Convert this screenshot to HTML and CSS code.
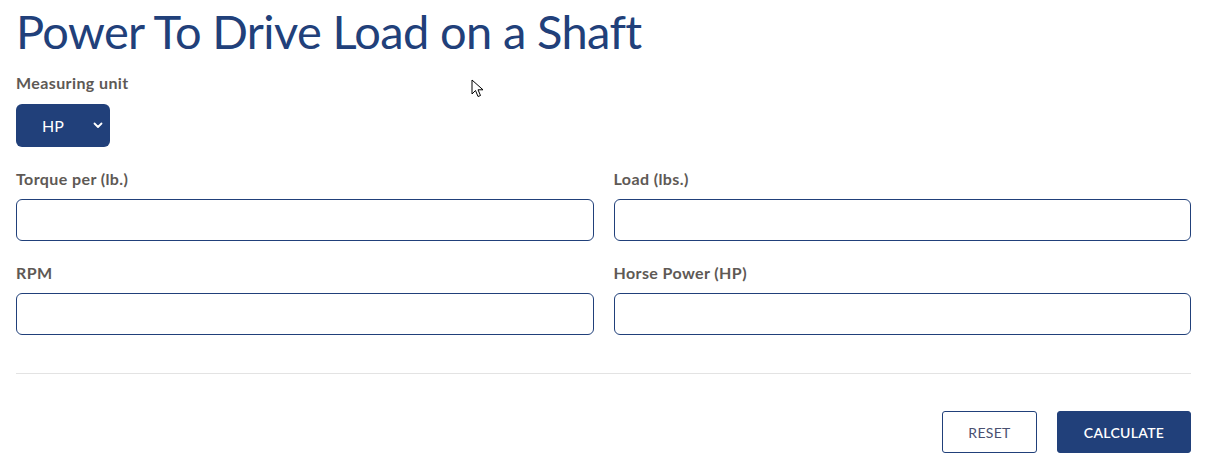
FILE: index.html
```html
<!DOCTYPE html>
<html lang="en">
<head>
    <meta charset="UTF-8">
    <meta name="viewport" content="width=device-width, initial-scale=1.0">
    <title>Power To Drive Load on a Shaft</title>
    <link rel="stylesheet" href="styles.css">
</head>
<body>
    <div class="calc-container">
        <h1 class="calc-title">Power To Drive Load on a Shaft</h1>

        <div class="form-group unit-group">
            <label for="unit">Measuring unit</label>
            <div class="select-wrap">
                <select id="unit" name="unit">
                    <option>HP</option>
                    <option>kW</option>
                </select>
                <svg class="select-arrow" width="10" height="7" viewBox="0 0 10 7">
                    <path d="M1.5 1.5 L5 5 L8.5 1.5" fill="none" stroke="#ffffff" stroke-width="1.8" stroke-linecap="round" stroke-linejoin="round"/>
                </svg>
            </div>
        </div>

        <div class="form-grid">
            <div class="form-group">
                <label for="torque">Torque per (lb.)</label>
                <input type="text" id="torque" name="torque">
            </div>
            <div class="form-group">
                <label for="load">Load (lbs.)</label>
                <input type="text" id="load" name="load">
            </div>
            <div class="form-group">
                <label for="rpm">RPM</label>
                <input type="text" id="rpm" name="rpm">
            </div>
            <div class="form-group">
                <label for="hp">Horse Power (HP)</label>
                <input type="text" id="hp" name="hp">
            </div>
        </div>

        <hr class="divider">

        <div class="actions">
            <button type="button" class="btn btn-reset">RESET</button>
            <button type="button" class="btn btn-calc">CALCULATE</button>
        </div>
    </div>

    <!-- puntero del ratón -->
    <svg class="cursor" width="14" height="20" viewBox="0 0 14 20">
        <path d="M1 1 L1 15 L4.5 11.5 L7 17.5 L9.5 16.5 L7 10.8 L12 10.8 Z" fill="#ffffff" stroke="#000000" stroke-width="1" stroke-linejoin="miter"/>
    </svg>
</body>
</html>
```

FILE: styles.css
```css
:root {
    --color-primary: #21407a;
    --color-label: #5e5955;
    --color-line: #e3e3e3;
}

* {
    margin: 0;
    padding: 0;
    box-sizing: border-box;
    font-family: 'Lato', 'Open Sans', sans-serif;
}

body {
    background-color: #ffffff;
    position: relative;
}

.calc-container {
    width: 1175px;
    margin-left: 16px;
    padding-top: 4px;
}

.calc-title {
    font-size: 47px;
    font-weight: 400;
    color: var(--color-primary);
    line-height: 54px;
    letter-spacing: -0.65px;
    margin-bottom: 15px;
}

.form-group label {
    display: block;
    font-size: 16px;
    font-weight: 700;
    color: var(--color-label);
    line-height: 20px;
    letter-spacing: 0.4px;
    margin-bottom: 10px;
}

.unit-group {
    margin-bottom: 22px;
}

.unit-group label {
    margin-bottom: 11px;
}

.select-wrap {
    position: relative;
    width: 94px;
    height: 43px;
}

.select-wrap select {
    width: 100%;
    height: 100%;
    appearance: none;
    -webkit-appearance: none;
    background-color: var(--color-primary);
    color: #ffffff;
    border: none;
    border-radius: 6px;
    font-size: 16px;
    padding-left: 26px;
    outline: none;
}

.select-arrow {
    position: absolute;
    right: 7px;
    top: 18px;
    pointer-events: none;
}

.form-grid {
    display: grid;
    grid-template-columns: 1fr 1fr;
    column-gap: 20px;
    row-gap: 22px;
}

.form-grid input {
    width: 100%;
    height: 42px;
    border: 1px solid var(--color-primary);
    border-radius: 6px;
    padding: 0 12px;
    font-size: 15px;
    outline: none;
}

.divider {
    border: none;
    border-top: 1px solid var(--color-line);
    margin-top: 38px;
}

.actions {
    display: flex;
    justify-content: flex-end;
    gap: 20px;
    margin-top: 37px;
}

.btn {
    height: 42px;
    border-radius: 3px;
    font-size: 14px;
    cursor: pointer;
    letter-spacing: 0.3px;
}

.btn-reset {
    width: 95px;
    background-color: #ffffff;
    border: 1px solid var(--color-primary);
    color: #4a5070;
    font-weight: 400;
}

.btn-calc {
    width: 134px;
    background-color: var(--color-primary);
    border: 1px solid var(--color-primary);
    color: #ffffff;
    font-weight: 600;
}

.cursor {
    position: absolute;
    left: 471px;
    top: 79px;
}
```
